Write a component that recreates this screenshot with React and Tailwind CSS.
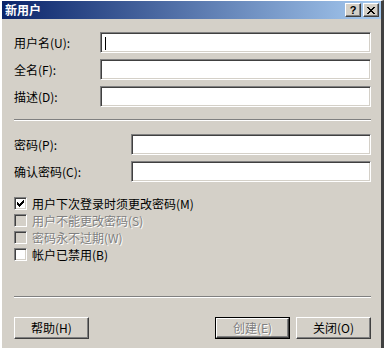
import React from "react";

const font = { fontFamily: '"Noto Sans CJK SC", "Liberation Sans", sans-serif' };

function Input({ w, cursor }) {
  return (
    <div
      className={`relative h-[21px] bg-white border border-t-[#808080] border-l-[#808080] border-b-white border-r-white shadow-[inset_1px_1px_0_#404040,inset_-1px_-1px_0_#d4d0c8] ${w}`}
    >
      {cursor && <div className="absolute left-[4px] top-[4px] w-px h-[13px] bg-black" />}
    </div>
  );
}

function Btn({ children, def, disabled }) {
  const inner = (
    <div
      className={`w-full h-full flex items-center justify-center bg-[#d4d0c8] border border-t-white border-l-white border-b-[#404040] border-r-[#404040] shadow-[inset_-1px_-1px_0_#808080] text-[12px] leading-none ${
        disabled ? "text-[#808080] [text-shadow:1px_1px_0_#fff]" : "text-black"
      }`}
    >
      {children}
    </div>
  );
  if (def)
    return <div className="w-[75px] h-[22px] border border-black">{inner}</div>;
  return <div className="w-[75px] h-[22px]">{inner}</div>;
}

function Check({ checked, disabled, label }) {
  return (
    <div className="flex items-center h-[17px]">
      <div
        className={`w-[13px] h-[13px] border border-t-[#808080] border-l-[#808080] border-b-white border-r-white shadow-[inset_1px_1px_0_#404040,inset_-1px_-1px_0_#d4d0c8] flex items-center justify-center ${
          disabled ? "bg-[#d4d0c8]" : "bg-white"
        }`}
      >
        {checked && (
          <svg width="7" height="7" viewBox="0 0 7 7" shapeRendering="crispEdges">
            <path d="M0 2h1v3H0zM1 3h1v3H1zM2 4h1v3H2zM3 3h1v3H3zM4 2h1v3H4zM5 1h1v3H5zM6 0h1v3H6z" fill="#000" />
          </svg>
        )}
      </div>
      <span
        className={`ml-[5px] text-[12px] leading-none ${
          disabled ? "text-[#808080] [text-shadow:1px_1px_0_#fff]" : "text-black"
        }`}
      >
        {label}
      </span>
    </div>
  );
}

function Sep() {
  return <div className="h-[2px] border-t border-t-[#808080] border-b border-b-white" />;
}

export default function App() {
  return (
    <div style={font} className="w-[384px] h-[348px] overflow-hidden bg-[#d4d0c8]">
      <div className="h-full flex flex-col border-l-2 border-l-white border-t border-t-white border-r-[3px] border-r-[#404040] bg-[#d4d0c8]">
        {/* title bar */}
        <div className="h-[18px] flex items-center justify-between bg-[linear-gradient(to_right,#0a246a,#a6caf0)] pl-[3px] pr-[2px]">
          <span className="text-white font-bold text-[12px] leading-none">新用户</span>
          <div className="flex gap-[2px]">
            <div className="w-[16px] h-[14px] bg-[#d4d0c8] border border-t-white border-l-white border-b-[#404040] border-r-[#404040] shadow-[inset_-1px_-1px_0_#808080] flex items-center justify-center">
              <span className="text-[11px] font-bold leading-none text-black" style={{ fontFamily: '"Liberation Sans", sans-serif' }}>?</span>
            </div>
            <div className="w-[16px] h-[14px] bg-[#d4d0c8] border border-t-white border-l-white border-b-[#404040] border-r-[#404040] shadow-[inset_-1px_-1px_0_#808080] flex items-center justify-center">
              <svg width="8" height="7" viewBox="0 0 8 7" shapeRendering="crispEdges">
                <path d="M0 0h2v1H0zM6 0h2v1H6zM1 1h2v1H1zM5 1h2v1H5zM2 2h4v1H2zM3 3h2v1H3zM2 4h4v1H2zM1 5h2v1H1zM5 5h2v1H5zM0 6h2v1H0zM6 6h2v1H6z" fill="#000" />
              </svg>
            </div>
          </div>
        </div>

        <div className="flex flex-col pl-[12px] pr-[10px] pt-[13px]">
          <div className="flex flex-col gap-[6px]">
            <div className="flex items-center">
              <span className="w-[86px] text-[12px] leading-none text-black">用户名(U):</span>
              <Input w="w-[271px]" cursor />
            </div>
            <div className="flex items-center">
              <span className="w-[86px] text-[12px] leading-none text-black">全名(F):</span>
              <Input w="w-[271px]" />
            </div>
            <div className="flex items-center">
              <span className="w-[86px] text-[12px] leading-none text-black">描述(D):</span>
              <Input w="w-[271px]" />
            </div>
          </div>

          <div className="mt-[12px] mb-[13px]">
            <Sep />
          </div>

          <div className="flex flex-col gap-[6px]">
            <div className="flex items-center">
              <span className="w-[117px] text-[12px] leading-none text-black">密码(P):</span>
              <Input w="w-[240px]" />
            </div>
            <div className="flex items-center">
              <span className="w-[117px] text-[12px] leading-none text-black">确认密码(C):</span>
              <Input w="w-[240px]" />
            </div>
          </div>

          <div className="mt-[13px] flex flex-col">
            <Check checked label="用户下次登录时须更改密码(M)" />
            <Check disabled label="用户不能更改密码(S)" />
            <Check disabled label="密码永不过期(W)" />
            <Check label="帐户已禁用(B)" />
          </div>

          <div className="mt-[33px]">
            <Sep />
          </div>

          <div className="mt-[19px] flex items-center">
            <Btn>帮助(H)</Btn>
            <div className="flex-1" />
            <Btn def disabled>创建(E)</Btn>
            <div className="w-[6px]" />
            <Btn>关闭(O)</Btn>
          </div>
        </div>
      </div>
    </div>
  );
}
